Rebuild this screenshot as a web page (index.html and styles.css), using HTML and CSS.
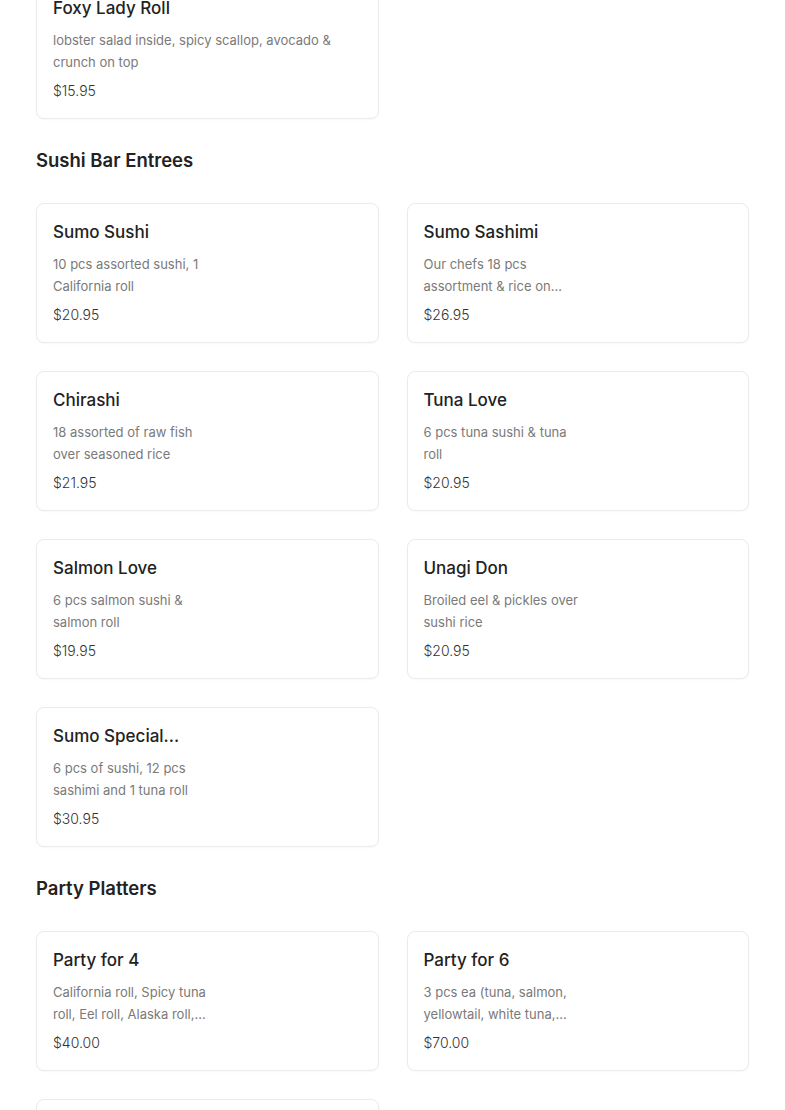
FILE: index.html
```html
<!DOCTYPE html>
<html lang="en">
<head>
    <meta charset="UTF-8">
    <meta name="viewport" content="width=device-width, initial-scale=1.0">
    <title>Menu</title>
    <link rel="stylesheet" href="styles.css">
</head>
<body>
    <div class="menu">
        <!-- end of previous section -->
        <div class="items first">
            <div class="item">
                <h3 class="item-name">Foxy Lady Roll</h3>
                <p class="item-desc">lobster salad inside, spicy scallop, avocado &amp; crunch on top</p>
                <p class="item-price">$15.95</p>
            </div>
        </div>

        <section class="section">
            <h2 class="section-title">Sushi Bar Entrees</h2>
            <div class="items">
                <div class="item">
                    <h3 class="item-name">Sumo Sushi</h3>
                    <p class="item-desc">10 pcs assorted sushi, 1<br>California roll</p>
                    <p class="item-price">$20.95</p>
                </div>
                <div class="item">
                    <h3 class="item-name">Sumo Sashimi</h3>
                    <p class="item-desc">Our chefs 18 pcs<br>assortment &amp; rice on...</p>
                    <p class="item-price">$26.95</p>
                </div>
                <div class="item">
                    <h3 class="item-name">Chirashi</h3>
                    <p class="item-desc">18 assorted of raw fish<br>over seasoned rice</p>
                    <p class="item-price">$21.95</p>
                </div>
                <div class="item">
                    <h3 class="item-name">Tuna Love</h3>
                    <p class="item-desc">6 pcs tuna sushi &amp; tuna<br>roll</p>
                    <p class="item-price">$20.95</p>
                </div>
                <div class="item">
                    <h3 class="item-name">Salmon Love</h3>
                    <p class="item-desc">6 pcs salmon sushi &amp;<br>salmon roll</p>
                    <p class="item-price">$19.95</p>
                </div>
                <div class="item">
                    <h3 class="item-name">Unagi Don</h3>
                    <p class="item-desc">Broiled eel &amp; pickles over<br>sushi rice</p>
                    <p class="item-price">$20.95</p>
                </div>
                <div class="item">
                    <h3 class="item-name">Sumo Special...</h3>
                    <p class="item-desc">6 pcs of sushi, 12 pcs<br>sashimi and 1 tuna roll</p>
                    <p class="item-price">$30.95</p>
                </div>
            </div>
        </section>

        <section class="section">
            <h2 class="section-title">Party Platters</h2>
            <div class="items">
                <div class="item">
                    <h3 class="item-name">Party for 4</h3>
                    <p class="item-desc">California roll, Spicy tuna<br>roll, Eel roll, Alaska roll,...</p>
                    <p class="item-price">$40.00</p>
                </div>
                <div class="item">
                    <h3 class="item-name">Party for 6</h3>
                    <p class="item-desc">3 pcs ea (tuna, salmon,<br>yellowtail, white tuna,...</p>
                    <p class="item-price">$70.00</p>
                </div>
                <div class="item"></div>
            </div>
        </section>
    </div>
</body>
</html>
```

FILE: styles.css
```css
body {
    margin: 0;
    background-color: #fff;
    font-family: Inter, "Noto Sans", sans-serif;
    color: #222;
}
.menu {
    padding: 0 36px;
}
.items {
    display: grid;
    grid-template-columns: 1fr 1fr;
    gap: 28px;
}
.items.first {
    margin-top: -21px;
}
.section {
    margin-top: 27px;
}
.section-title {
    margin: 0 0 29px;
    font-size: 18.5px;
    line-height: 28px;
    font-weight: 600;
    color: #222;
}
.item {
    height: 140px;
    box-sizing: border-box;
    padding: 16px;
    border: 1px solid #ebebeb;
    border-radius: 8px;
    background-color: #fff;
    box-shadow: 0 1px 2px rgba(0, 0, 0, 0.03);
}
.item-name {
    margin: 0;
    font-size: 17px;
    line-height: 24px;
    font-weight: 500;
    color: #222;
}
.item-desc {
    margin: 9px 0 0;
    font-size: 13px;
    line-height: 22px;
    color: #7a7a7a;
}
.item-price {
    margin: 7px 0 0;
    font-size: 14px;
    line-height: 22px;
    font-weight: 300;
    color: #333;
}
```
